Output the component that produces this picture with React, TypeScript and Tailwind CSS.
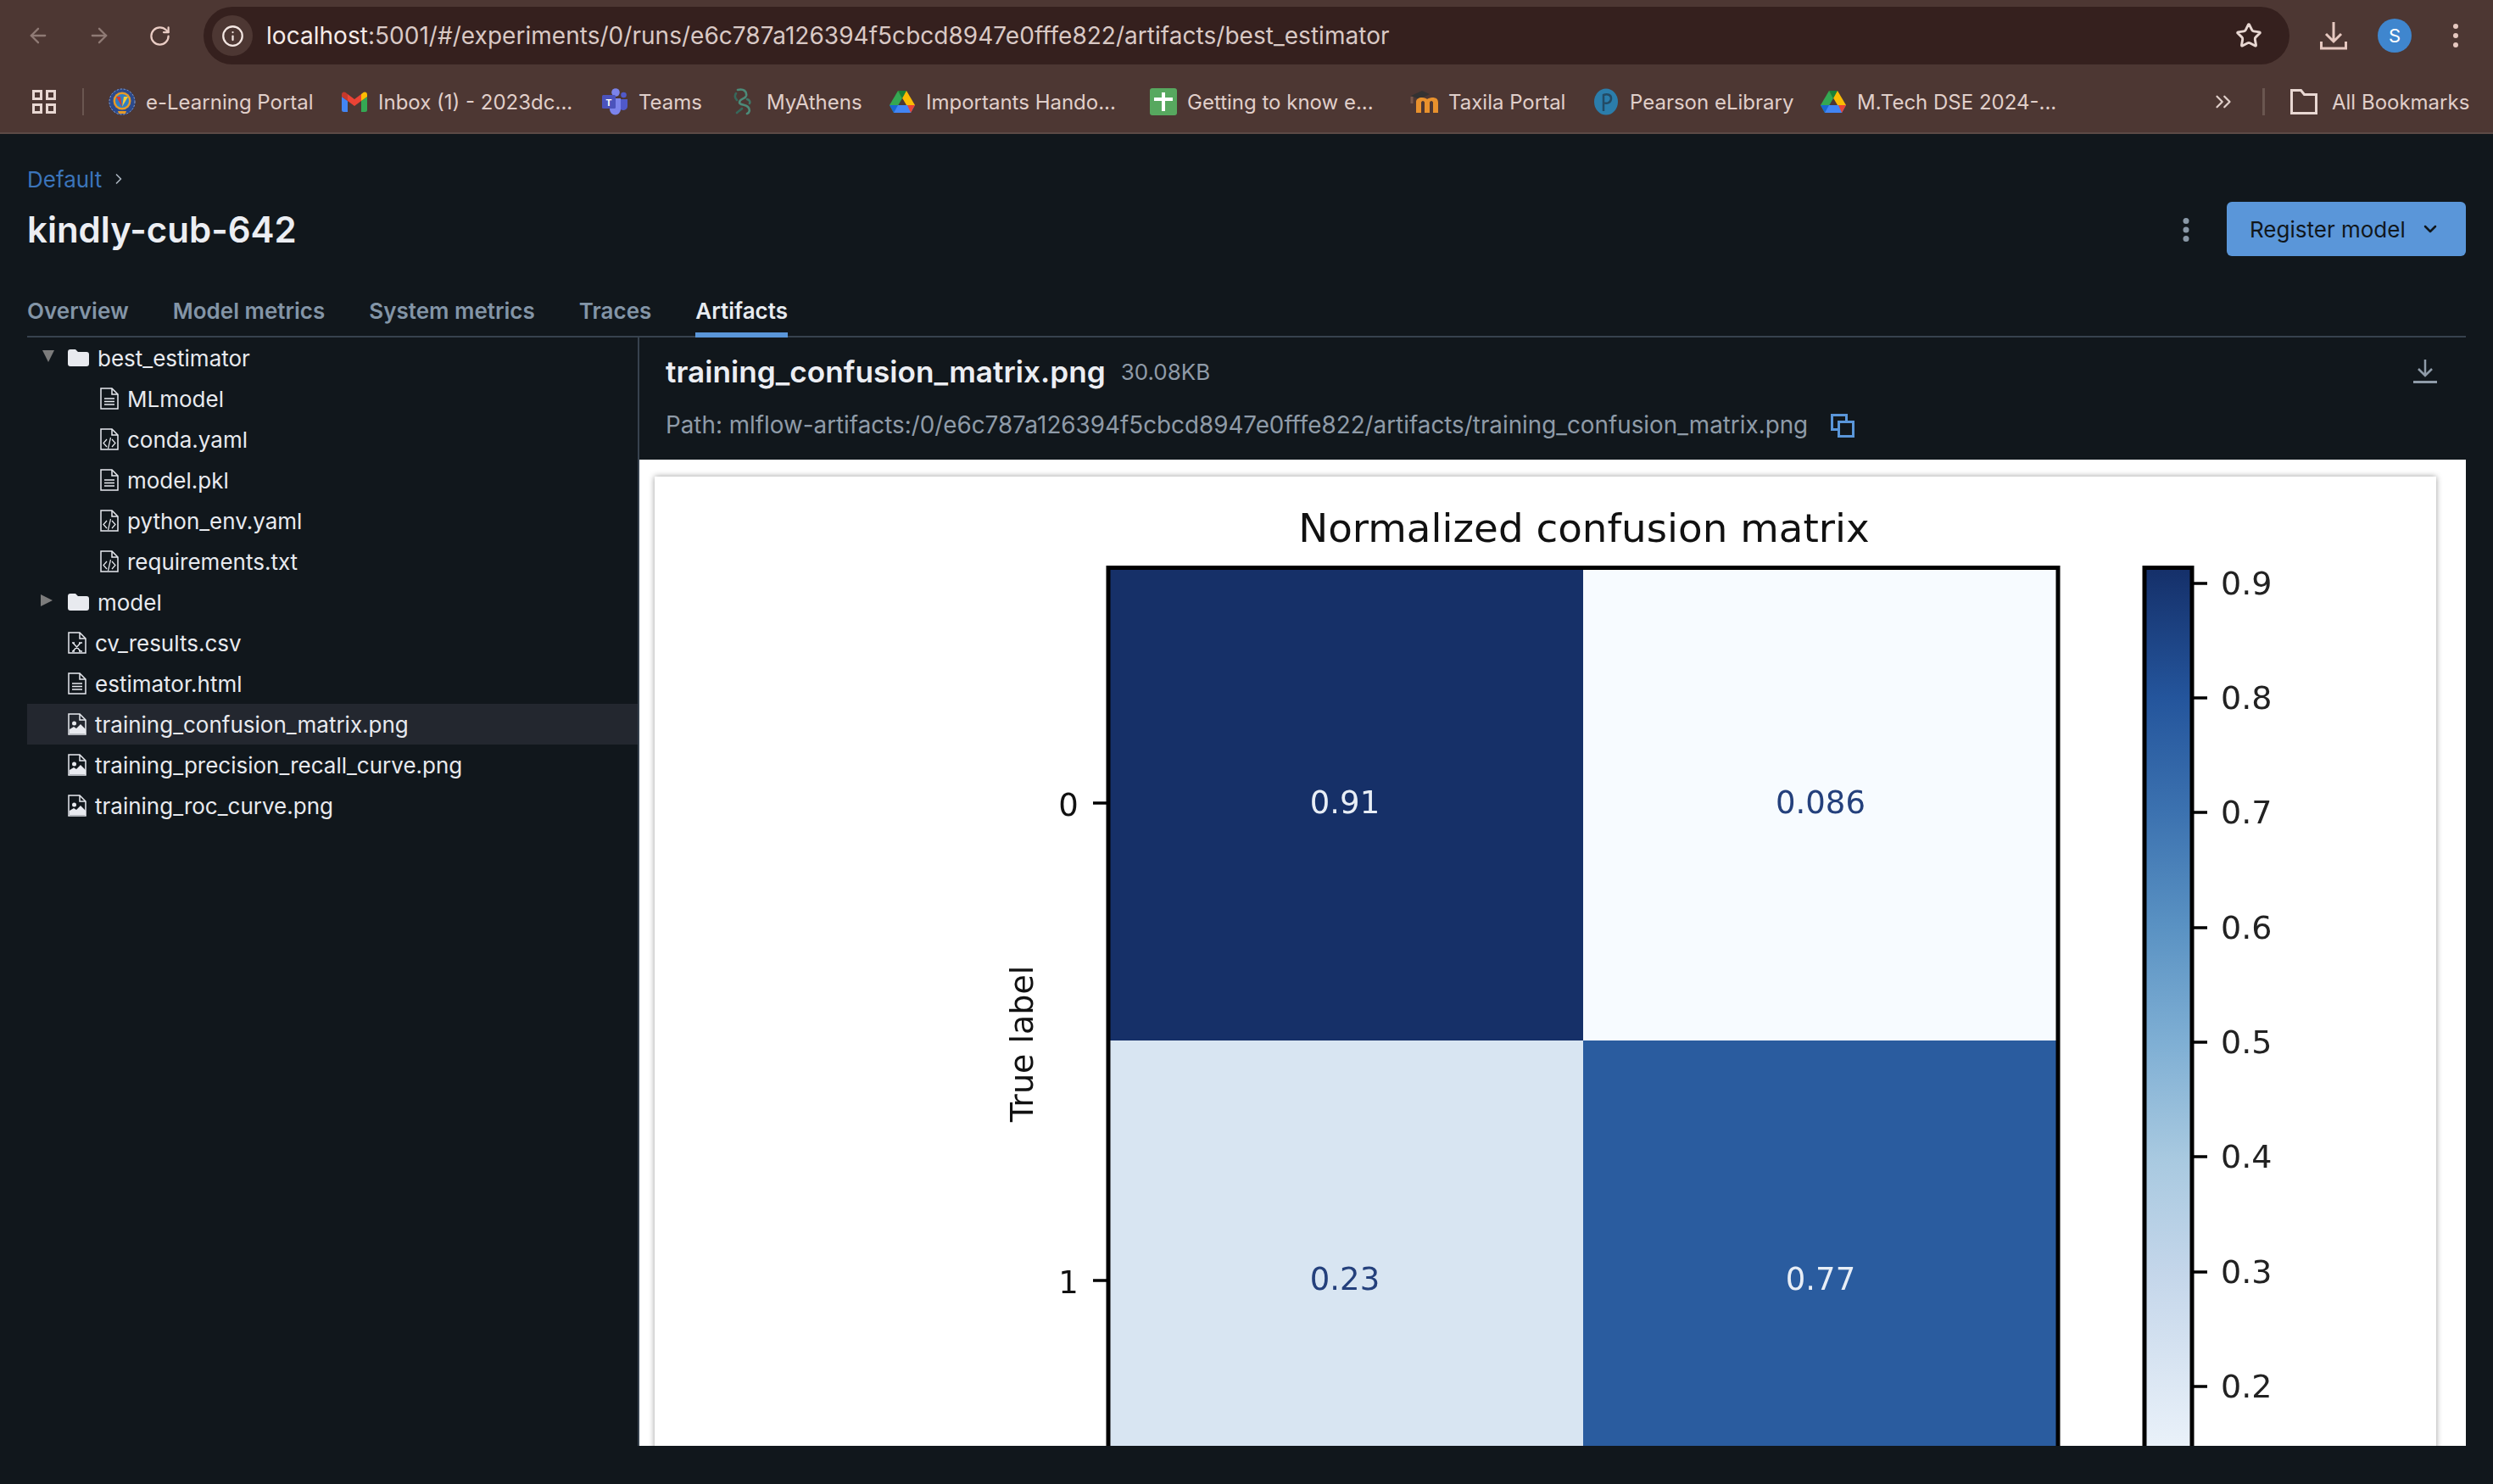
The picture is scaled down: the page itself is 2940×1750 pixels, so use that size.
import { ArrowLeft, ArrowRight, ChevronDown, ChevronRight, ChevronsRight, Info, RotateCw, Star } from 'lucide-react'

const font = "font-['Inter','Liberation_Sans',sans-serif]"

function BitsLogo() {
  return (
    <svg viewBox="0 0 32 32" className="h-8 w-8">
      <circle cx="16" cy="16" r="15.500" fill="#2c4a8c" />
      <circle cx="16" cy="16" r="15" fill="none" stroke="#8fa3c9" strokeWidth="1" strokeDasharray="2 2" />
      <circle cx="16" cy="15" r="10.500" fill="#e69a26" />
      <circle cx="16" cy="15" r="8" fill="#2e7fc4" />
      <path d="M9 10l5 0 2 12z" fill="#d9372c" />
      <path d="M16 22l2-12 5 0z" fill="#f3cd3a" />
      <path d="M11 27h10l-1 3h-8z" fill="#e69a26" />
    </svg>
  )
}

function GmailLogo() {
  return (
    <svg viewBox="0 0 30 24" className="h-6 w-[30px]">
      <path d="M0 6v15.500A2.500 2.500 0 0 0 2.500 24H7V11z" fill="#4285f4" />
      <path d="M23 11v13h4.500a2.500 2.500 0 0 0 2.500-2.500V6z" fill="#34a853" />
      <path d="M0 3.500V6l7 5V3L4.500 1C2.500-.5 0 1 0 3.500z" fill="#c5392c" />
      <path d="M7 11V3l8 6 8-6v8l-8 6z" fill="#ea4335" />
      <path d="M23 3v8l7-5V3.500C30 1 27.500-.5 25.500 1z" fill="#fbbc04" />
    </svg>
  )
}

function TeamsLogo() {
  return (
    <svg viewBox="0 0 30 32" className="h-8 w-[30px]">
      <circle cx="16" cy="5" r="4.800" fill="#7b83eb" />
      <circle cx="25.500" cy="8" r="3.300" fill="#5059c9" />
      <path d="M19 13h11v8a5 5 0 0 1-9 3z" fill="#5059c9" />
      <path d="M9 12h13v13a6.500 6.500 0 0 1-13 0z" fill="#7b83eb" />
      <rect x="0" y="8" width="16" height="16" rx="1.500" fill="#4b53bc" />
      <text x="8" y="20.500" textAnchor="middle" fontSize="11" fontWeight="700" fill="#ffffff" fontFamily="Inter, sans-serif">T</text>
    </svg>
  )
}

function AthensLogo() {
  return (
    <svg viewBox="0 0 24 32" className="h-8 w-6" fill="none" stroke="#4c8b79" strokeWidth="2.600" strokeLinecap="round">
      <path d="M6 2c7-2 11 2 10 7-1 4-8 3-8 8 0 3 7 2 10 5 3 3 2 7-1 8" />
      <path d="M4 6c-2 3-1 6 1 8M11 24c-2 2-4 3-6 5" stroke="#37685b" />
      <path d="M17 13c3 1 4 3 3 5" stroke="#3f7667" />
    </svg>
  )
}

function DriveLogo() {
  return (
    <svg viewBox="0 0 30 27" className="h-[27px] w-[30px]">
      <path d="M10 0h10l10 17H20z" fill="#fbbc04" />
      <path d="M10 0 0 17l5 9 10-17z" fill="#34a853" />
      <path d="M10 0h10l-5 9z" fill="#188038" />
      <path d="M5 17h25l-5 9H5z" fill="#4285f4" />
      <path d="M25 26l5-9h-9z" fill="#ea4335" />
      <path d="M0 17h10l-5 9z" fill="#1967d2" />
    </svg>
  )
}

function SheetLogo() {
  return (
    <svg viewBox="0 0 32 32" className="h-8 w-8">
      <rect width="32" height="32" rx="3" fill="#57a85f" />
      <rect x="14" y="5" width="4" height="22" fill="#ffffff" />
      <rect x="5" y="11" width="22" height="4" fill="#ffffff" />
    </svg>
  )
}

function MoodleLogo() {
  return (
    <svg viewBox="0 0 34 28" className="h-7 w-[34px] shrink-0">
      <path d="M1 7 14 1l9 4-12 6z" fill="#333232" />
      <path d="M2 8v8" stroke="#77584c" strokeWidth="3" />
      <path d="M7 27V14c0-3 3-5 7-5 3 0 5 1 6 2 1-1 4-2 6-2 5 0 7 2 7 6v12h-6V15c0-1-1-2-2-2s-2 1-2 2v12h-6V15c0-1-1-2-2-2s-2 1-2 2v12z" fill="#e8912d" />
    </svg>
  )
}

function PearsonLogo() {
  return (
    <svg viewBox="0 0 28 32" className="h-8 w-7">
      <ellipse cx="14" cy="16" rx="14" ry="15.500" fill="#2b7dab" />
      <path d="M11 27V8c5-2 9 0 9 4 0 5-5 7-9 5" fill="none" stroke="#234a64" strokeWidth="2.500" />
    </svg>
  )
}

function AppsGrid() {
  return (
    <svg viewBox="0 0 28 28" className="h-7 w-7" fill="none" stroke="#e8d7d2" strokeWidth="3">
      <rect x="1.500" y="1.500" width="9" height="9" />
      <rect x="17.500" y="1.500" width="9" height="9" />
      <rect x="1.500" y="17.500" width="9" height="9" />
      <rect x="17.500" y="17.500" width="9" height="9" />
    </svg>
  )
}

function FileIcon({ kind }: { kind: 'text' | 'code' | 'excel' | 'image' }) {
  return (
    <svg viewBox="0 0 22 26" className="h-[26px] w-[22px] shrink-0" fill="none" stroke="#e8eaef" strokeWidth="1.500">
      <path d="M1 1h13l7 7v17H1z" />
      <path d="M14 1v7h7" />
      {kind === 'text' && <path d="M5 13h12M5 16.500h12M5 20h12" />}
      {kind === 'code' && <path d="M8 13l-4 4.500 4 4.500M14 13l4 4.500-4 4.500M12.500 11l-3 13" strokeWidth="1.200" />}
      {kind === 'excel' && <path d="M6 13l9 10M15 13 6 23M5 13h3M13 13h4M5 23h3M13 23h4" strokeWidth="1.400" />}
      {kind === 'image' && (
        <>
          <circle cx="7.500" cy="12" r="2.500" fill="#e8eaef" stroke="none" />
          <path d="M2 24v-5l5-3 3 2 5-5 6 6v5z" fill="#e8eaef" stroke="none" />
        </>
      )}
    </svg>
  )
}

function FolderIcon() {
  return (
    <svg viewBox="0 0 25 20" className="h-5 w-[25px] shrink-0">
      <path d="M0 3a3 3 0 0 1 3-3h6l3 3h10a3 3 0 0 1 3 3v11a3 3 0 0 1-3 3H3a3 3 0 0 1-3-3z" fill="#e8eaef" />
    </svg>
  )
}

const bookmarks = [
  { label: 'e-Learning Portal', icon: <BitsLogo />, width: 'w-[274px]' },
  { label: 'Inbox (1) - 2023dc...', icon: <GmailLogo />, width: 'w-[307px]' },
  { label: 'Teams', icon: <TeamsLogo />, width: 'w-[151px]' },
  { label: 'MyAthens', icon: <AthensLogo />, width: 'w-[188px]' },
  { label: 'Importants Hando...', icon: <DriveLogo />, width: 'w-[308px]' },
  { label: 'Getting to know e...', icon: <SheetLogo />, width: 'w-[308px]' },
  { label: 'Taxila Portal', icon: <MoodleLogo />, width: 'w-[214px]' },
  { label: 'Pearson eLibrary', icon: <PearsonLogo />, width: 'w-[268px]' },
  { label: 'M.Tech DSE 2024-...', icon: <DriveLogo />, width: 'w-[461px]' },
]

function BrowserChrome() {
  return (
    <div className="h-[158px] shrink-0 border-b-2 border-[#5c4a46] bg-[#4d3733] text-[#e0cfca]">
      <div className="flex h-[84px] items-start pt-2">
        <div className="flex h-[68px] w-[240px] items-center pl-[31px]">
          <ArrowLeft className="h-7 w-7 text-[#8f7a75]" strokeWidth={2} />
          <ArrowRight className="ml-[44px] h-7 w-7 text-[#8f7a75]" strokeWidth={2} />
          <RotateCw className="ml-[44px] h-[27px] w-[27px] text-[#eaccc4]" strokeWidth={2} />
        </div>
        <div className="flex h-[68px] w-[2460px] items-center rounded-full bg-[#35201e] pl-[10px] pr-[32px]">
          <div className="flex h-12 w-12 items-center justify-center rounded-full bg-[#4d3733]">
            <Info className="h-[27px] w-[27px] text-[#f3e6e2]" strokeWidth={2} />
          </div>
          <div className="ml-4 flex-1 whitespace-nowrap text-[28px] tracking-[0.03px] text-[#d9c9c5]">
            <span className="text-[#f5ebe8]">localhost</span>:5001/#/experiments/0/runs/e6c787a126394f5cbcd8947e0fffe822/artifacts/best_estimator
          </div>
          <Star className="h-8 w-8 text-[#e8d7d2]" strokeWidth={2.200} />
        </div>
        <div className="flex h-[68px] flex-1 items-center pl-[36px]">
          <svg viewBox="0 0 32 34" className="h-[34px] w-8" fill="none" stroke="#e6c8c0" strokeWidth="3">
            <path d="M16 1v22M7 15l9 9 9-9M1.500 24v8h29v-8" />
          </svg>
          <div className="ml-[36px] flex h-10 w-10 items-center justify-center rounded-full bg-[#3f86ce] text-[22px] text-white">S</div>
          <svg viewBox="0 0 8 30" className="ml-[48px] h-[30px] w-2" fill="#e6c8c0">
            <circle cx="4" cy="4" r="3" />
            <circle cx="4" cy="15" r="3" />
            <circle cx="4" cy="26" r="3" />
          </svg>
        </div>
      </div>
      <div className="flex h-[72px] items-center pl-[38px]">
        <AppsGrid />
        <div className="ml-[31px] mr-[29px] h-8 w-[2px] bg-[#6a5650]" />
        {bookmarks.map((b) => (
          <div key={b.label} className={`flex items-center ${b.width}`}>
            <div className="flex h-8 w-8 shrink-0 items-center justify-center">{b.icon}</div>
            <span className="ml-3 whitespace-nowrap pt-[2px] text-[24px]">{b.label}</span>
          </div>
        ))}
        <ChevronsRight className="h-[30px] w-[30px]" strokeWidth={1.800} />
        <div className="ml-[31px] h-8 w-[3px] bg-[#6a5650]" />
        <svg viewBox="0 0 32 30" className="ml-[30px] h-[30px] w-8" fill="none" stroke="#e8d7d2" strokeWidth="3">
          <path d="M1.500 28.500V1.500h11l4 5h14v22z" />
        </svg>
        <span className="ml-[17px] whitespace-nowrap pt-[2px] text-[24px]">All Bookmarks</span>
      </div>
    </div>
  )
}

function ConfusionChart() {
  const ticks = [
    ['0.9', 688],
    ['0.8', 823],
    ['0.7', 958],
    ['0.6', 1094],
    ['0.5', 1229],
    ['0.4', 1364],
    ['0.3', 1500],
    ['0.2', 1635],
  ] as const
  return (
    <svg viewBox="772 562 2101 1143" className="block h-[1143px] w-[2101px] blur-[0.5px]" fontFamily="'DejaVu Sans', sans-serif">
      <defs>
        <linearGradient id="blues" gradientUnits="userSpaceOnUse" x1="0" y1="672" x2="0" y2="1782">
          <stop offset="0" stopColor="#15306a" />
          <stop offset="0.136" stopColor="#24559c" />
          <stop offset="0.258" stopColor="#3c72b0" />
          <stop offset="0.38" stopColor="#5a92c3" />
          <stop offset="0.503" stopColor="#7fafd4" />
          <stop offset="0.625" stopColor="#a8c9e0" />
          <stop offset="0.747" stopColor="#c4d6ea" />
          <stop offset="0.869" stopColor="#dde8f4" />
          <stop offset="1" stopColor="#f7fbff" />
        </linearGradient>
      </defs>
      <text x="1868" y="639" textAnchor="middle" fontSize="46.800" fill="#111111">Normalized confusion matrix</text>

      <rect x="1307" y="670" width="560" height="557" fill="#163068" />
      <rect x="1867" y="670" width="560" height="557" fill="#f7fbff" />
      <rect x="1307" y="1227" width="560" height="560" fill="#d8e5f2" />
      <rect x="1867" y="1227" width="560" height="560" fill="#2a5c9f" />
      <rect x="1307" y="669.500" width="1120" height="1200" fill="none" stroke="#000000" strokeWidth="5" />

      <text x="1586" y="959" textAnchor="middle" fontSize="37" fill="#e8eef6">0.91</text>
      <text x="2147" y="959" textAnchor="middle" fontSize="37" fill="#24407c">0.086</text>
      <text x="1586" y="1521" textAnchor="middle" fontSize="37" fill="#24407c">0.23</text>
      <text x="2147" y="1521" textAnchor="middle" fontSize="37" fill="#e8eef6">0.77</text>

      <path d="M1289 947h16M1289 1510h16" stroke="#000000" strokeWidth="3.500" />
      <text x="1260" y="962" textAnchor="middle" fontSize="37" fill="#111111">0</text>
      <text x="1260" y="1525" textAnchor="middle" fontSize="37" fill="#111111">1</text>
      <text x="1218" y="1231" textAnchor="middle" fontSize="38" fill="#111111" transform="rotate(-90 1218 1231)">True label</text>

      <rect x="2529" y="669.500" width="56" height="1200" fill="url(#blues)" stroke="#000000" strokeWidth="5" />
      {ticks.map(([label, y]) => (
        <g key={label}>
          <path d={`M2587 ${y}h16`} stroke="#000000" strokeWidth="3.500" />
          <text x="2619" y={y + 13} fontSize="38" fill="#222222">{label}</text>
        </g>
      ))}
    </svg>
  )
}

function TreeRow({ indent, active, children }: { indent: string; active?: boolean; children: React.ReactNode }) {
  return (
    <div className={`flex h-12 items-center gap-[10px] text-[26px] text-[#e8eaef] ${indent} ${active ? 'bg-[#23272f]' : ''}`}>
      {children}
    </div>
  )
}

export default function App() {
  return (
    <div className={`flex h-[1750px] w-[2940px] flex-col overflow-hidden bg-[#11171c] ${font}`}>
      <BrowserChrome />
      <div className="flex min-h-0 flex-1 flex-col pb-[45px] pl-[32px] pr-[32px]">
        <div className="flex h-[178px] shrink-0 justify-between">
          <div className="pt-[35px]">
            <div className="flex h-9 items-center text-[26px] text-[#3b74ba]">
              Default
              <ChevronRight className="ml-[10px] h-[20px] w-[20px] text-[#aab4bf]" strokeWidth={2} />
            </div>
            <h1 className="mt-[13px] text-[42px] font-semibold leading-[58px] text-[#eceef3]">kindly-cub-642</h1>
          </div>
          <div className="flex items-start pt-[80px]">
            <svg viewBox="0 0 8 28" className="mr-[44px] mt-[19px] h-7 w-2" fill="#8a98a6">
              <circle cx="4" cy="3.500" r="3.500" />
              <circle cx="4" cy="14" r="3.500" />
              <circle cx="4" cy="24.500" r="3.500" />
            </svg>
            <div className="flex h-16 w-[282px] items-center rounded-[6px] bg-[#5a96d9] pl-[27px] text-[26px] text-[#11171c]">
              Register model
              <ChevronDown className="ml-[17px] h-6 w-6" strokeWidth={2.500} />
            </div>
          </div>
        </div>

        <div className="flex h-[62px] shrink-0 gap-[52px] border-b-2 border-[#37424e] text-[26px] font-semibold text-[#8395a7]">
          <div className="flex h-[62px] items-center border-b-[6px] border-transparent pt-[4px]">Overview</div>
          <div className="flex h-[62px] items-center border-b-[6px] border-transparent pt-[4px]">Model metrics</div>
          <div className="flex h-[62px] items-center border-b-[6px] border-transparent pt-[4px]">System metrics</div>
          <div className="flex h-[62px] items-center border-b-[6px] border-transparent pt-[4px]">Traces</div>
          <div className="flex h-[62px] items-center border-b-[6px] border-[#5a96d9] pt-[4px] text-[#e8ecf1]">Artifacts</div>
        </div>

        <div className="flex min-h-0 flex-1">
          <div className="w-[722px] shrink-0 border-r-2 border-[#37424e]">
            <TreeRow indent="pl-[18px]">
              <svg viewBox="0 0 14 14" className="-mt-1 mr-[6px] h-[14px] w-[14px] shrink-0" fill="#7c7c7c">
                <path d="M0 0h14L7 14z" />
              </svg>
              <FolderIcon />
              <span>best_estimator</span>
            </TreeRow>
            <TreeRow indent="pl-[86px]"><FileIcon kind="text" /><span>MLmodel</span></TreeRow>
            <TreeRow indent="pl-[86px]"><FileIcon kind="code" /><span>conda.yaml</span></TreeRow>
            <TreeRow indent="pl-[86px]"><FileIcon kind="text" /><span>model.pkl</span></TreeRow>
            <TreeRow indent="pl-[86px]"><FileIcon kind="code" /><span>python_env.yaml</span></TreeRow>
            <TreeRow indent="pl-[86px]"><FileIcon kind="code" /><span>requirements.txt</span></TreeRow>
            <TreeRow indent="pl-[16px]">
              <svg viewBox="0 0 14 14" className="-mt-1 mr-[8px] h-[14px] w-[14px] shrink-0" fill="#7c7c7c">
                <path d="M0 0l14 7L0 14z" />
              </svg>
              <FolderIcon />
              <span>model</span>
            </TreeRow>
            <TreeRow indent="pl-[48px]"><FileIcon kind="excel" /><span>cv_results.csv</span></TreeRow>
            <TreeRow indent="pl-[48px]"><FileIcon kind="text" /><span>estimator.html</span></TreeRow>
            <TreeRow indent="pl-[48px]" active><FileIcon kind="image" /><span>training_confusion_matrix.png</span></TreeRow>
            <TreeRow indent="pl-[48px]"><FileIcon kind="image" /><span>training_precision_recall_curve.png</span></TreeRow>
            <TreeRow indent="pl-[48px]"><FileIcon kind="image" /><span>training_roc_curve.png</span></TreeRow>
          </div>

          <div className="flex min-w-0 flex-1 flex-col">
            <div className="h-[144px] shrink-0 pl-[31px] pr-[34px]">
              <div className="flex h-[80px] items-center">
                <span className="text-[35.200px] font-semibold text-[#eceef3]">training_confusion_matrix.png</span>
                <span className="ml-[18px] text-[26px] text-[#8f9ba8]">30.08KB</span>
                <svg viewBox="0 0 28 28" className="ml-auto h-7 w-7" fill="none" stroke="#8f9ba8">
                  <path d="M14 0v18M6 11l8 8 8-8" strokeWidth="2.500" />
                  <path d="M0 26.500h28" strokeWidth="3" />
                </svg>
              </div>
              <div className="mt-[3px] flex h-[42px] items-center text-[27.800px] text-[#8f9ba8]">
                Path: mlflow-artifacts:/0/e6c787a126394f5cbcd8947e0fffe822/artifacts/training_confusion_matrix.png
                <svg viewBox="0 0 28 28" className="ml-[27px] h-7 w-7" fill="none" stroke="#5a96d9" strokeWidth="3">
                  <path d="M8 18.500H1.500v-17h17V8" />
                  <rect x="9.500" y="9.500" width="17" height="17" />
                </svg>
              </div>
            </div>
            <div className="min-h-0 flex-1 overflow-hidden bg-white pl-[18px] pt-[20px]">
              <div className="h-[1300px] w-[2101px] bg-white shadow-[0_0_7px_rgba(0,0,0,0.4)]">
                <ConfusionChart />
              </div>
            </div>
          </div>
        </div>
      </div>
    </div>
  )
}
